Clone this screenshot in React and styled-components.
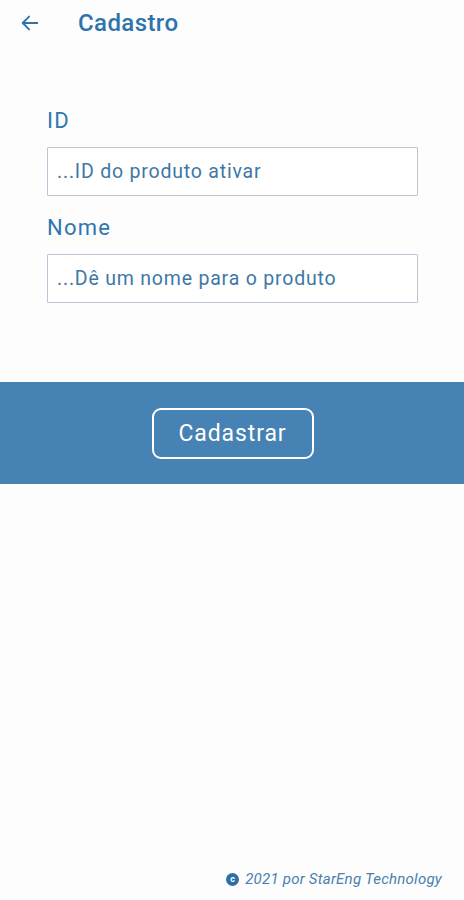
import React from "react";
import styled, { createGlobalStyle } from "styled-components";

const GlobalStyle = createGlobalStyle`
  html, body {
    margin: 0;
    padding: 0;
    background: #fdfdfd;
  }
  * {
    box-sizing: border-box;
  }
`;

const Page = styled.div`
  width: 464px;
  height: 900px;
  display: flex;
  flex-direction: column;
  background: #fdfdfd;
  font-family: Roboto, "Noto Sans", sans-serif;
`;

const Header = styled.header`
  height: 46px;
  display: flex;
  align-items: center;
  padding-left: 19px;
  gap: 37px;
  color: #2e73ab;
`;

const BackButton = styled.button`
  border: 0;
  background: none;
  padding: 0;
  display: flex;
  color: inherit;
`;

const Title = styled.h1`
  margin: 0;
  font-size: 24px;
  font-weight: 500;
  letter-spacing: 0.4px;
  color: #2e73ab;
`;

const Form = styled.form`
  display: flex;
  flex-direction: column;
  padding: 63px 46px 0 47px;
`;

const Label = styled.label`
  font-size: 22px;
  letter-spacing: 1.2px;
  color: #2f77ae;
  margin-bottom: 14px;
  line-height: 24px;
`;

const Input = styled.input`
  height: 49px;
  border: 1.5px solid #b9c6d4;
  border-radius: 1px;
  padding: 0 9px;
  font-family: inherit;
  font-size: 19.5px;
  letter-spacing: 0.8px;
  color: #2f6f9e;
  margin-bottom: ${(p) => p.$gap || 0}px;
  background: #fff;
  &::placeholder {
    color: #3d78a6;
  }
`;

const Band = styled.div`
  margin-top: 79px;
  height: 102px;
  background: #4682b4;
  display: flex;
  align-items: center;
  justify-content: center;
`;

const SubmitButton = styled.button`
  width: 162px;
  height: 51px;
  margin-left: 1px;
  border: 2px solid #ffffff;
  border-radius: 9px;
  background: transparent;
  color: #ffffff;
  font-family: inherit;
  font-size: 23px;
  letter-spacing: 0.9px;
`;

const Footer = styled.footer`
  margin-top: auto;
  padding: 0 22px 12px 0;
  display: flex;
  justify-content: flex-end;
  align-items: center;
  gap: 6px;
  font-size: 15px;
  letter-spacing: 0.25px;
  font-style: italic;
  color: #4a7fb0;
`;

const CopyBadge = styled.span`
  width: 13px;
  height: 13px;
  border-radius: 50%;
  background: #2f6fa8;
  color: #fff;
  font-size: 9px;
  font-style: normal;
  font-weight: 700;
  letter-spacing: 0;
  display: flex;
  align-items: center;
  justify-content: center;
`;

const ArrowLeft = () => (
  <svg width="22" height="22" viewBox="0 0 24 24" fill="none">
    <path
      d="M20 12H5M11 5l-7 7 7 7"
      stroke="currentColor"
      strokeWidth="2"
      strokeLinecap="round"
      strokeLinejoin="round"
    />
  </svg>
);

export default function App() {
  return (
    <>
      <GlobalStyle />
      <Page>
        <Header>
          <BackButton type="button">
            <ArrowLeft />
          </BackButton>
          <Title>Cadastro</Title>
        </Header>
        <Form onSubmit={(e) => e.preventDefault()}>
          <Label htmlFor="id">ID</Label>
          <Input id="id" placeholder="...ID do produto ativar" $gap={20} />
          <Label htmlFor="nome">Nome</Label>
          <Input id="nome" placeholder="...Dê um nome para o produto" />
        </Form>
        <Band>
          <SubmitButton type="button">Cadastrar</SubmitButton>
        </Band>
        <Footer>
          <CopyBadge>c</CopyBadge>
          2021 por StarEng Technology
        </Footer>
      </Page>
    </>
  );
}
